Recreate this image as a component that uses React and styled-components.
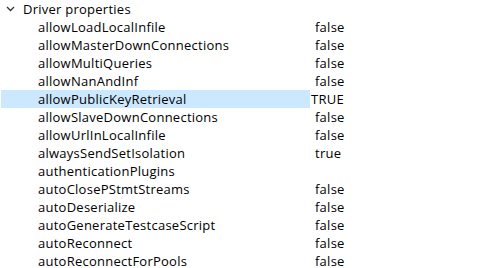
import React from "react";
import styled, { createGlobalStyle } from "styled-components";

const GlobalStyle = createGlobalStyle`
    body {
        margin: 0;
        background: #fff;
        font-family: "Open Sans", "Noto Sans", sans-serif;
        font-size: 13px;
        letter-spacing: 0.25px;
        color: #000;
    }
`;

const Tree = styled.div`
    display: flex;
    flex-direction: column;
    width: 491px;
    height: 268px;
    overflow: hidden;
    padding-left: 1px;
    box-sizing: border-box;
`;

const GroupRow = styled.div`
    display: flex;
    align-items: center;
    height: 18px;
`;

const Chevron = styled.svg`
    width: 9px;
    height: 6px;
    margin-left: 5px;
    margin-right: 8px;
    margin-top: 0px;
`;

const GroupLabel = styled.span`
    line-height: 18px;
`;

const PropRow = styled.div`
    display: grid;
    grid-template-columns: 309px 1fr;
    height: 18px;
    line-height: 18px;
`;

const NameCell = styled.div`
    padding-left: 37px;
    background: ${(p) => (p.selected ? "#cce8ff" : "transparent")};
    white-space: nowrap;
`;

const ValueCell = styled.div`
    padding-left: ${(p) => (p.selected ? "1px" : "5px")};
    white-space: nowrap;
`;

const props = [
    ["allowLoadLocalInfile", "false"],
    ["allowMasterDownConnections", "false"],
    ["allowMultiQueries", "false"],
    ["allowNanAndInf", "false"],
    ["allowPublicKeyRetrieval", "TRUE", true],
    ["allowSlaveDownConnections", "false"],
    ["allowUrlInLocalInfile", "false"],
    ["alwaysSendSetIsolation", "true"],
    ["authenticationPlugins", ""],
    ["autoClosePStmtStreams", "false"],
    ["autoDeserialize", "false"],
    ["autoGenerateTestcaseScript", "false"],
    ["autoReconnect", "false"],
    ["autoReconnectForPools", "false"],
];

export default function App() {
    return (
        <React.Fragment>
            <GlobalStyle />
            <Tree>
                <GroupRow>
                    <Chevron viewBox="0 0 9 6">
                        <path d="M1 1 L4.5 4.5 L8 1" fill="none" stroke="#333" strokeWidth="1.3" />
                    </Chevron>
                    <GroupLabel>Driver properties</GroupLabel>
                </GroupRow>
                {props.map(([name, value, selected]) => (
                    <PropRow key={name}>
                        <NameCell selected={selected}>{name}</NameCell>
                        <ValueCell selected={selected}>{value}</ValueCell>
                    </PropRow>
                ))}
            </Tree>
        </React.Fragment>
    );
}
